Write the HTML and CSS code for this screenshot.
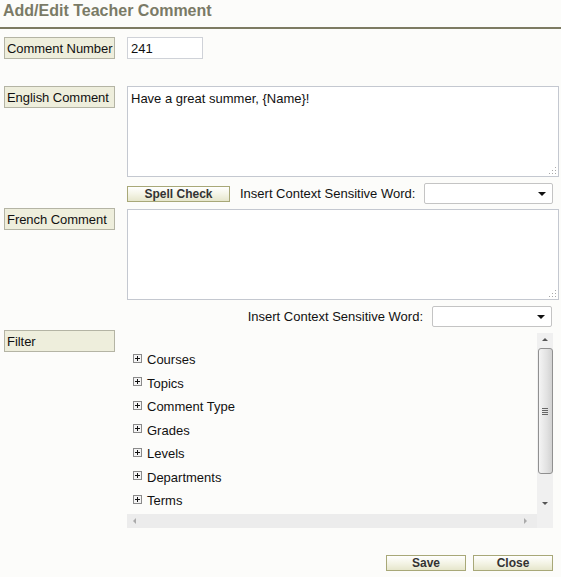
FILE: index.html
```html
<!DOCTYPE html>
<html>
<head>
<meta charset="utf-8">
<link rel="stylesheet" href="styles.css">
</head>
<body>
<div class="page">
  <h1 class="title">Add/Edit Teacher Comment</h1>
  <div class="rule"></div>

  <div class="row r-number">
    <div class="label">Comment Number</div>
    <div class="field"><div class="input num">241</div></div>
  </div>

  <div class="row r-english">
    <div class="label">English Comment</div>
    <div class="field"><div class="textarea">Have a great summer, {Name}!<span class="grip"></span></div></div>
  </div>

  <div class="tools r-tools1">
    <div class="btn spell">Spell Check</div>
    <span class="ins">Insert Context Sensitive Word:</span>
    <div class="select sel1"><span class="caret"></span></div>
  </div>

  <div class="row r-french">
    <div class="label">French Comment</div>
    <div class="field"><div class="textarea fr"><span class="grip"></span></div></div>
  </div>

  <div class="tools r-tools2">
    <span class="ins">Insert Context Sensitive Word:</span>
    <div class="select sel2"><span class="caret"></span></div>
  </div>

  <div class="row r-filter">
    <div class="label">Filter</div>
    <div class="field">
      <div class="tree">
        <div class="tree-main">
          <ul class="items">
            <li><span class="plus"></span>Courses</li>
            <li><span class="plus"></span>Topics</li>
            <li><span class="plus"></span>Comment Type</li>
            <li><span class="plus"></span>Grades</li>
            <li><span class="plus"></span>Levels</li>
            <li><span class="plus"></span>Departments</li>
            <li><span class="plus"></span>Terms</li>
          </ul>
          <div class="vbar">
            <span class="arr up"></span>
            <div class="thumb"><span class="grip-lines"></span></div>
            <span class="arr down"></span>
          </div>
        </div>
        <div class="hbar">
          <span class="harr left"></span>
          <span class="harr right"></span>
          <span class="corner"></span>
        </div>
      </div>
    </div>
  </div>

  <div class="actions">
    <div class="btn act">Save</div>
    <div class="btn act">Close</div>
  </div>
</div>
</body>
</html>
```

FILE: styles.css
```css
html, body {
  margin: 0;
  padding: 0;
  background: #fcfcfa;
}
body {
  font-family: "Liberation Sans", Arial, sans-serif;
  font-size: 13px;
  color: #111;
}
.page {
  width: 561px;
  height: 577px;
  overflow: hidden;
}
.title {
  margin: 0;
  padding: 2px 0 0 3px;
  height: 23px;
  font-size: 16px;
  font-weight: bold;
  color: #7a7a66;
  line-height: 18px;
}
.rule {
  height: 2px;
  background: #7d7b62;
  margin-top: 2px;
}
.row {
  display: flex;
  align-items: flex-start;
}
.label {
  box-sizing: border-box;
  width: 111px;
  height: 22px;
  margin-left: 4px;
  padding: 3px 0 0 2px;
  background: #eeeedc;
  border: 1px solid #b4b4a4;
  line-height: 15px;
  color: #111;
  white-space: nowrap;
  letter-spacing: -0.05px;
}
.field {
  margin-left: 12px;
}
.r-number { margin-top: 8px; }
.input {
  box-sizing: border-box;
  width: 76px;
  height: 22px;
  background: #fff;
  border: 1px solid #cfd2d8;
  padding: 3px 0 0 3px;
  line-height: 15px;
}
.r-english { margin-top: 27px; }
.textarea {
  position: relative;
  box-sizing: border-box;
  width: 432px;
  height: 91px;
  background: #fff;
  border: 1px solid #c4c8d0;
  padding: 4px 0 0 3px;
  line-height: 15px;
}
.grip {
  position: absolute;
  right: 2px;
  bottom: 2px;
  width: 8px;
  height: 8px;
  background:
    radial-gradient(circle, #a8a8a8 0.8px, transparent 1px) 0 0 / 3px 3px;
  clip-path: polygon(100% 0, 100% 100%, 0 100%);
}
.tools {
  display: flex;
  align-items: center;
  height: 21px;
}
.r-tools1 {
  margin-top: 6px;
  padding-left: 127px;
}
.btn {
  box-sizing: border-box;
  height: 16px;
  border: 1px solid #a8a878;
  background: linear-gradient(#ffffff, #f4f4e6 50%, #e6e6cc);
  font-size: 12px;
  font-weight: bold;
  color: #333;
  text-align: center;
  line-height: 14px;
}
.spell { width: 103px; }
.ins {
  margin-left: 10px;
  white-space: nowrap;
}
.select {
  position: relative;
  box-sizing: border-box;
  height: 21px;
  background: #fff;
  border: 1px solid #c4c4c4;
  border-radius: 2px;
  margin-left: 9px;
}
.sel1 { width: 129px; }
.sel2 { width: 120px; }
.caret {
  position: absolute;
  right: 6px;
  top: 8px;
  width: 0;
  height: 0;
  border-left: 4px solid transparent;
  border-right: 4px solid transparent;
  border-top: 4px solid #111;
}
.r-french { margin-top: 4px; }
.textarea.fr { margin-top: 1px; }
.r-tools2 {
  margin-top: 6px;
  justify-content: flex-end;
  padding-right: 9px;
}
.r-tools2 .ins { margin-left: 0; }
.r-filter { margin-top: 3px; }
.tree {
  box-sizing: border-box;
  width: 426px;
  height: 195px;
  margin-top: 3px;
  display: flex;
  flex-direction: column;
}
.tree-main {
  display: flex;
  flex: 1;
}
.items {
  list-style: none;
  margin: 0;
  padding: 15px 0 0 6px;
  flex: 1;
}
.items li {
  display: flex;
  align-items: center;
  height: 23.5px;
  line-height: 15px;
  white-space: nowrap;
}
.plus {
  position: relative;
  box-sizing: border-box;
  width: 9px;
  height: 9px;
  border: 1px solid #8a8a8a;
  background: #f4f4f4;
  margin-right: 5px;
  margin-top: -3px;
}
.plus::before {
  content: "";
  position: absolute;
  left: 1px;
  top: 3px;
  width: 5px;
  height: 1px;
  background: #111;
}
.plus::after {
  content: "";
  position: absolute;
  left: 3px;
  top: 1px;
  width: 1px;
  height: 5px;
  background: #111;
}
.vbar {
  width: 16px;
  background: #f0f0f0;
  display: flex;
  flex-direction: column;
  align-items: center;
}
.arr {
  width: 0;
  height: 0;
  border-left: 3px solid transparent;
  border-right: 3px solid transparent;
}
.arr.up {
  border-bottom: 3px solid #555;
  margin-top: 5px;
}
.arr.down {
  border-top: 3px solid #555;
  margin-top: 28px;
}
.thumb {
  box-sizing: border-box;
  width: 15px;
  height: 126px;
  margin-top: 7px;
  border: 1px solid #909090;
  border-radius: 3px;
  background: linear-gradient(90deg, #f4f4f4, #e2e2e2 60%, #d2d2d2);
  display: flex;
  align-items: center;
  justify-content: center;
}
.grip-lines {
  width: 6px;
  height: 7px;
  background: repeating-linear-gradient(#666 0 1px, transparent 1px 2px);
}
.hbar {
  position: relative;
  height: 14px;
  background: #ececec;
  display: flex;
  align-items: center;
  justify-content: space-between;
  padding: 0 26px 0 6px;
}
.harr {
  width: 0;
  height: 0;
  border-top: 3px solid transparent;
  border-bottom: 3px solid transparent;
}
.harr.left { border-right: 3px solid #aaa; }
.harr.right { border-left: 3px solid #aaa; }
.corner {
  position: absolute;
  right: 0;
  top: 0;
  width: 16px;
  height: 14px;
  background: #f0f0f0;
}
.actions {
  display: flex;
  justify-content: flex-end;
  gap: 7px;
  padding-right: 8px;
  margin-top: 27px;
}
.act { width: 80px; }
```
